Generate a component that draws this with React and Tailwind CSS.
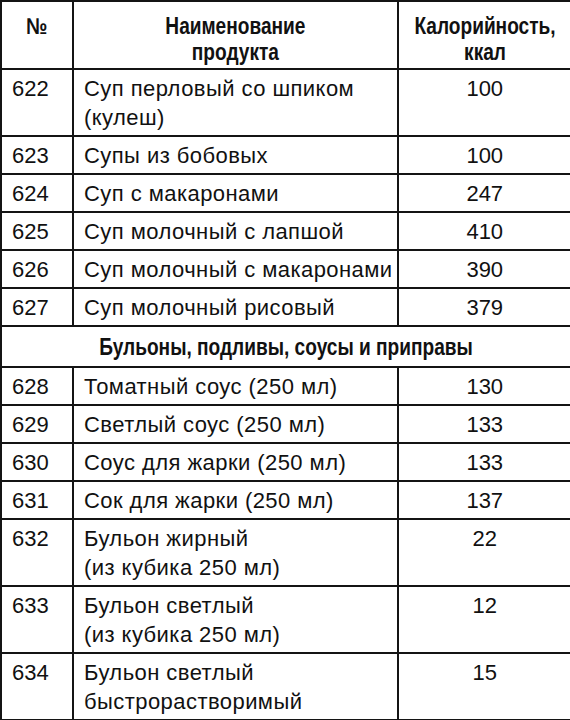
import React from "react";

const soups = [
  ["622", ["Суп перловый со шпиком", "(кулеш)"], "100"],
  ["623", ["Супы из бобовых"], "100"],
  ["624", ["Суп с макаронами"], "247"],
  ["625", ["Суп молочный с лапшой"], "410"],
  ["626", ["Суп молочный с макаронами"], "390"],
  ["627", ["Суп молочный рисовый"], "379"],
];

const sauces = [
  ["628", ["Томатный соус (250 мл)"], "130"],
  ["629", ["Светлый соус (250 мл)"], "133"],
  ["630", ["Соус для жарки (250 мл)"], "133"],
  ["631", ["Сок для жарки (250 мл)"], "137"],
  ["632", ["Бульон жирный", "(из кубика 250 мл)"], "22"],
  ["633", ["Бульон светлый", "(из кубика 250 мл)"], "12"],
  ["634", ["Бульон светлый", "быстрорастворимый"], "15"],
];

// left and middle columns get a dark 2px frame, the last one a thin grey right edge
const cell = "border-y-2 border-l-2 border-r-2 border-[#141414] align-top";
const lastCell = "border-y-2 border-l-2 border-r border-[#141414] border-r-[#8a8a8a] align-top";
const body = "pt-[4px] pb-[3px] text-[22px] leading-[29px]";
const head = "pt-[11px] pb-[3px] text-[23px] leading-[26px] font-bold";

// bold condensed look of the headings, centred even when wider than the cell
const Cond = ({ children }) => (
  <div className="flex justify-center">
    <span className="inline-block shrink-0 scale-x-[0.83] whitespace-nowrap text-center">{children}</span>
  </div>
);

const Row = ({ item }) => {
  const [num, name, kcal] = item;
  return (
    <tr>
      <td className={`${cell} ${body} pl-[10px]`}>{num}</td>
      <td className={`${cell} ${body} pl-[10px] tracking-[0.02em] whitespace-nowrap`}>
        {name.map((line) => (
          <div key={line}>{line}</div>
        ))}
      </td>
      <td className={`${lastCell} ${body} text-center`}>{kcal}</td>
    </tr>
  );
};

const App = () => {
  return (
    <div className="w-[570px] h-[720px] bg-white text-[#111] overflow-hidden font-['Liberation_Sans',Arial,sans-serif]">
      <table className="w-[570px] table-fixed border-collapse">
        <colgroup>
          <col className="w-[72px]" />
          <col className="w-[325px]" />
          <col className="w-[173px]" />
        </colgroup>
        <thead>
          <tr>
            <th className={`${cell} ${head}`}>
              <Cond>№</Cond>
            </th>
            <th className={`${cell} ${head}`}>
              <Cond>
                Наименование
                <br />
                продукта
              </Cond>
            </th>
            <th className={`${lastCell} ${head}`}>
              <Cond>
                Калорийность,
                <br />
                ккал
              </Cond>
            </th>
          </tr>
        </thead>
        <tbody>
          {soups.map((item) => (
            <Row key={item[0]} item={item} />
          ))}
          <tr>
            <td colSpan={3} className={`${lastCell} pt-[7px] pb-[6px] text-[23px] leading-[26px] font-bold`}>
              <Cond>Бульоны, подливы, соусы и приправы</Cond>
            </td>
          </tr>
          {sauces.map((item) => (
            <Row key={item[0]} item={item} />
          ))}
        </tbody>
      </table>
    </div>
  );
};

export default App;
